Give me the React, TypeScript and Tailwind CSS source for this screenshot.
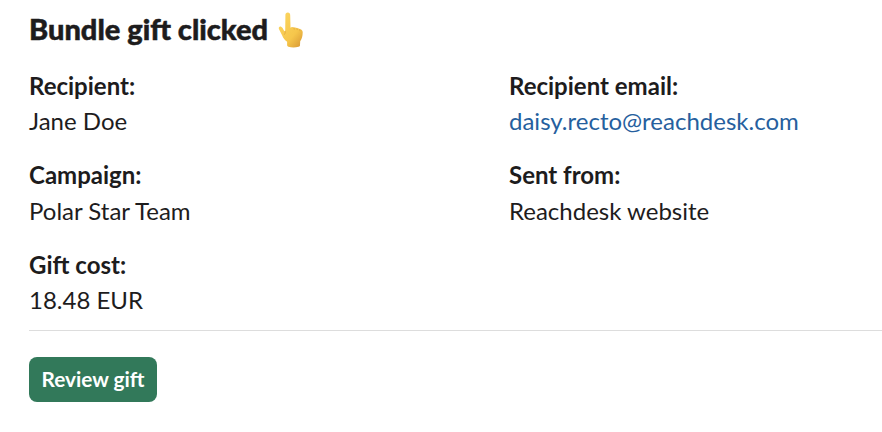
const Field = ({ label, value, link }: { label: string; value: string; link?: boolean }) => (
  <div className="h-[70.4px]">
    <div className="font-bold">{label}</div>
    <div className={link ? "text-[#265f9e]" : ""}>{value}</div>
  </div>
);

const PointingHand = () => (
  <svg className="ml-[10px] mt-[1px] h-[36px] w-[26px]" viewBox="0 0 26 36" aria-label="Pointing up">
    <defs>
      <linearGradient id="skin" x1="0.1" y1="0" x2="0.9" y2="1">
        <stop offset="0" stopColor="#fbd661" />
        <stop offset="0.65" stopColor="#f6c64b" />
        <stop offset="1" stopColor="#d99a35" />
      </linearGradient>
    </defs>
    <path
      d="M7.4 3.1C7.4 1.4 8.3.5 9.8.5s2.4 1 2.4 2.7l.3 12.5c.9-.9 2.5-.9 3.4 0 1-.5 2.4-.3 3.1.6 1-.3 2.2.1 2.8 1 1.8-.1 3 1.2 2.9 3.3-.1 4-.9 6.4-2.5 8.6l-.2 3.7c0 1-.5 1.6-1.5 1.9-3.2.9-7 .9-10 0-.9-.2-1.4-.8-1.4-1.7v-3.3c-2.4-1.6-3.8-3.6-4.9-6.3L.9 16.9c-.6-1.7.9-2.9 2.5-2 1.1.6 1.7 1.9 2.4 3.3.4.8.9 1.2 1.4 1z"
      fill="url(#skin)"
    />
    <path
      d="M7.2 19.2c.2 1.4-.1 2.4-.7 3.2M15.9 15.7l.3 1.5M19 16.3l.2 1.4M21.8 17.3l.1 1.4"
      fill="none" stroke="#dda238" strokeWidth=".7" strokeLinecap="round"
    />
  </svg>
);

export default function App() {
  return (
    <div className="h-[432px] w-[882px] overflow-hidden bg-white pl-[29px] pt-[9px] font-['Lato',sans-serif] text-[24px] leading-[35.2px] text-[#1d1c1d]">
      <h1 className="flex h-[40px] items-center text-[29px] font-black [-webkit-text-stroke:0.5px_#1d1c1d]">
        Bundle gift clicked
        <PointingHand />
      </h1>
      <div className="mt-[19px] grid grid-cols-[480px_480px] gap-y-[19px]">
        <Field label="Recipient:" value="Jane Doe" />
        <Field label="Recipient email:" value="daisy.recto@reachdesk.com" link />
        <Field label="Campaign:" value="Polar Star Team" />
        <Field label="Sent from:" value="Reachdesk website" />
        <Field label="Gift cost:" value="18.48 EUR" />
      </div>
      <div className="mt-[12.8px] h-px bg-[#dddddd]" />
      <button className="mt-[26px] block h-[45px] w-[128px] rounded-[8px] bg-[#32795a] pb-[2px] text-[20.8px] font-bold text-white">
        Review gift
      </button>
    </div>
  );
}
